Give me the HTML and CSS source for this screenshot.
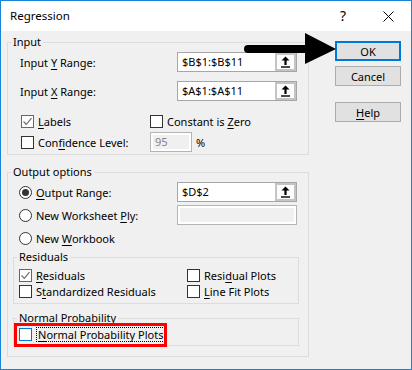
FILE: index.html
```html
<!DOCTYPE html>
<html lang="en">
<head>
    <meta charset="UTF-8">
    <title>Regression</title>
    <link rel="stylesheet" href="styles.css">
</head>
<body>

    <div class="window">

        <!-- Barra del titolo -->
        <div class="titlebar">
            <span class="title">Regression</span>
            <span class="title-help">?</span>
            <svg class="title-close" width="11" height="11" viewBox="0 0 11 11">
                <path d="M0.5 0.5 L10.5 10.5 M10.5 0.5 L0.5 10.5" stroke="#000" stroke-width="1" fill="none"/>
            </svg>
        </div>

        <div class="client">
            <div class="options">

                <!-- Input -->
                <fieldset class="group">
                    <legend>Input</legend>
                    <div class="range-row first">
                        <span>Input <u>Y</u> Range:</span>
                        <div class="refedit">
                            <span class="refedit-text">$B$1:$B$11</span>
                            <span class="ref-btn">
                                <svg width="9" height="12" viewBox="0 0 9 12"><path d="M4.5 0.5 L8.5 4.5 H5.6 V9 H3.4 V4.5 H0.5 Z" fill="#000"/><rect x="0" y="10.3" width="9" height="1.4" fill="#000"/></svg>
                            </span>
                        </div>
                    </div>
                    <div class="range-row">
                        <span>Input <u>X</u> Range:</span>
                        <div class="refedit">
                            <span class="refedit-text">$A$1:$A$11</span>
                            <span class="ref-btn">
                                <svg width="9" height="12" viewBox="0 0 9 12"><path d="M4.5 0.5 L8.5 4.5 H5.6 V9 H3.4 V4.5 H0.5 Z" fill="#000"/><rect x="0" y="10.3" width="9" height="1.4" fill="#000"/></svg>
                            </span>
                        </div>
                    </div>
                    <div class="check-grid">
                        <span class="check"><span class="box checked"><svg width="11" height="11" viewBox="0 0 11 11"><path d="M1.5 5.5 L4.3 8.3 L9.5 2.2" stroke="#6e6e6e" stroke-width="1.2" fill="none"/></svg></span><span><u>L</u>abels</span></span>
                        <span class="check"><span class="box"></span><span>Constant is <u>Z</u>ero</span></span>
                        <span class="check"><span class="box"></span><span>Con<u>f</u>idence Level:</span></span>
                        <span class="level"><span class="disabled-box">95</span><span class="percent">%</span></span>
                    </div>
                </fieldset>

                <!-- Output options -->
                <fieldset class="group output">
                    <legend>Output options</legend>
                    <div class="radio-row first">
                        <span class="check"><span class="radio on"></span><span><u>O</u>utput Range:</span></span>
                        <div class="refedit">
                            <span class="refedit-text">$D$2</span>
                            <span class="ref-btn">
                                <svg width="9" height="12" viewBox="0 0 9 12"><path d="M4.5 0.5 L8.5 4.5 H5.6 V9 H3.4 V4.5 H0.5 Z" fill="#000"/><rect x="0" y="10.3" width="9" height="1.4" fill="#000"/></svg>
                            </span>
                        </div>
                    </div>
                    <div class="radio-row">
                        <span class="check"><span class="radio"></span><span>New Worksheet <u>P</u>ly:</span></span>
                        <span class="disabled-box wide"></span>
                    </div>
                    <div class="radio-row">
                        <span class="check"><span class="radio"></span><span>New <u>W</u>orkbook</span></span>
                    </div>

                    <fieldset class="group sub residuals">
                        <legend>Residuals</legend>
                        <div class="sub-grid">
                            <span class="check"><span class="box checked"><svg width="11" height="11" viewBox="0 0 11 11"><path d="M1.5 5.5 L4.3 8.3 L9.5 2.2" stroke="#6e6e6e" stroke-width="1.2" fill="none"/></svg></span><span><u>R</u>esiduals</span></span>
                            <span class="check"><span class="box"></span><span>Resi<u>d</u>ual Plots</span></span>
                            <span class="check"><span class="box"></span><span>S<u>t</u>andardized Residuals</span></span>
                            <span class="check"><span class="box"></span><span><u>L</u>ine Fit Plots</span></span>
                        </div>
                    </fieldset>

                    <fieldset class="group sub normal">
                        <legend>Normal Probability</legend>
                        <div class="sub-grid single">
                            <span class="check"><span class="box focus"></span><span class="focus-label"><u>N</u>ormal Probability Plots</span></span>
                        </div>
                    </fieldset>
                </fieldset>
            </div>

            <!-- Pulsanti -->
            <div class="buttons">
                <button class="btn default">OK</button>
                <button class="btn">Cancel</button>
                <button class="btn help"><u>H</u>elp</button>
            </div>
        </div>

        <!-- Annotazioni -->
        <svg class="pointer" width="100" height="36" viewBox="0 0 100 36">
            <line x1="8" y1="19" x2="68" y2="19" stroke="#000" stroke-width="8" stroke-linecap="round"/>
            <polygon points="65,3 96,19 65,34" fill="#000"/>
        </svg>
        <div class="highlight"></div>
    </div>

</body>
</html>
```

FILE: styles.css
```css
* {
    box-sizing: border-box;
}

body {
    margin: 0;
    font-family: "Noto Sans", sans-serif;
    font-size: 11px;
    color: #000;
    background: #fff;
}

u {
    text-decoration-thickness: 1px;
    text-underline-offset: 2px;
}

.window {
    position: relative;
    width: 412px;
    height: 370px;
    border: 1px solid #1883d7;
    background: #f0f0f0;
}

.titlebar {
    height: 30px;
    background: #fff;
    display: flex;
    align-items: center;
    padding-left: 9px;
    padding-right: 17px;
}

.title {
    flex: 1;
    font-size: 11.5px;
    line-height: 14px;
}

.title-help {
    font-size: 14px;
    line-height: 14px;
    margin-right: 37px;
}

.title-close {
    display: block;
}

.client {
    display: flex;
    padding: 4px 10px 0 6px;
}

.options {
    width: 302px;
}

/* Group box */
.group {
    margin: 0;
    padding: 0 0 2px 3px;
    border: 1px solid #dcdcdc;
    min-width: 0;
}

.group legend {
    padding: 0 2px;
    line-height: 14px;
}

.range-row {
    display: grid;
    grid-template-columns: 157px 120px;
    align-items: center;
    height: 20px;
    padding-left: 9px;
    margin-top: 9px;
}

.range-row.first {
    margin-top: 3px;
}

.refedit {
    display: flex;
    height: 20px;
    border: 1px solid #a6a6a6;
    background: #fff;
}

.refedit-text {
    flex: 1;
    padding-left: 4px;
    line-height: 18px;
}

.ref-btn {
    width: 21px;
    height: 18px;
    border: 2px solid #c4c4c4;
    background: #fcfcfc;
    display: flex;
    align-items: center;
    justify-content: center;
}

.check-grid {
    display: grid;
    grid-template-columns: 129px auto;
    grid-auto-rows: 20px;
    row-gap: 1px;
    align-items: center;
    padding-left: 10px;
    margin-top: 10px;
}

.check {
    display: flex;
    align-items: center;
    gap: 4px;
    white-space: nowrap;
}

.box {
    width: 13px;
    height: 13px;
    border: 1px solid #333;
    background: #fff;
    display: flex;
    align-items: center;
    justify-content: center;
    flex-shrink: 0;
}

.box.checked {
    border-color: #666;
}

.box.focus {
    border-color: #0078d7;
}

.radio {
    width: 13px;
    height: 13px;
    border: 1px solid #333;
    border-radius: 50%;
    background: #fff;
    display: flex;
    align-items: center;
    justify-content: center;
    flex-shrink: 0;
}

.radio.on::after {
    content: "";
    width: 7px;
    height: 7px;
    border-radius: 50%;
    background: #333;
}

.level {
    display: flex;
    align-items: center;
}

.disabled-box {
    width: 42px;
    height: 20px;
    border: 1px solid #b4b4b4;
    background: #f0f0f0;
    box-shadow: inset 0 0 0 2px #fff;
    color: #838383;
    padding-left: 4px;
    line-height: 18px;
}

.disabled-box.wide {
    width: 120px;
}

.percent {
    margin-left: 4px;
}

.output {
    margin-top: 10px;
    padding-bottom: 10px;
}

.radio-row {
    display: grid;
    grid-template-columns: 158px 120px;
    align-items: center;
    height: 20px;
    padding-left: 8px;
    margin-top: 3px;
}

.sub {
    margin: 2px 9px 0 2px;
}

.sub.residuals {
    padding-bottom: 4px;
}

.sub.normal {
    margin-top: 7px;
    padding-bottom: 3px;
}

.sub-grid {
    display: grid;
    grid-template-columns: 168px auto;
    grid-auto-rows: 16px;
    align-items: center;
    padding-left: 2px;
    margin-top: 3px;
}

.sub-grid.single {
    margin-top: 1px;
}

.focus-label {
    border: 1px dotted #000;
    padding: 0 1px;
    line-height: 13px;
}

/* Pulsanti */
.buttons {
    display: flex;
    flex-direction: column;
    width: 66px;
    margin-left: 26px;
    padding-top: 6px;
}

.btn {
    height: 20px;
    padding: 0;
    font-family: inherit;
    font-size: 11px;
    color: #000;
    background: #e1e1e1;
    border: 1px solid #adadad;
}

.btn + .btn {
    margin-top: 5px;
}

.btn.default {
    border: 2px solid #0078d7;
}

.btn.help {
    margin-top: 16px;
}

.pointer {
    position: absolute;
    left: 239px;
    top: 29px;
}

.highlight {
    position: absolute;
    left: 13px;
    top: 322px;
    width: 153px;
    height: 24px;
    border: 3px solid #ff0000;
}
```
